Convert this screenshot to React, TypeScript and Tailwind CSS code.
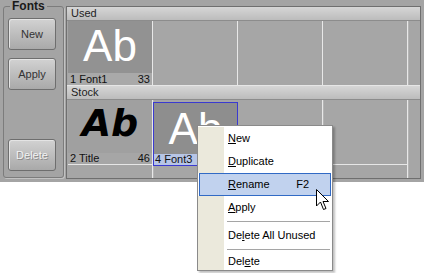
import React from 'react'

const CELL_BG = 'bg-[#a6a6a6]'

function Header({ title }: { title: string }) {
  return (
    <div className="h-[14px] flex items-center pl-[4px] text-[11px] leading-none text-[#1e1e1e] bg-gradient-to-b from-[#d6d6d6] to-[#bcbcbc] border-b border-[#8c8c8c]">
      {title}
    </div>
  )
}

function Sep() {
  return <div className="w-px self-stretch bg-[#e8e8e8] shadow-[1px_0_0_#b4b4b4]" />
}

function Btn({ label, disabled }: { label: string; disabled?: boolean }) {
  return (
    <button
      className={`w-[48px] h-[32px] ml-[4px] rounded-[3px] border border-[#6e6e6e] bg-gradient-to-b from-[#d2d2d2] to-[#a9a9a9] shadow-[inset_1px_1px_0_#e4e4e4] text-[11px] ${
        disabled ? 'text-[#f2f2f2] [text-shadow:1px_1px_0_#8a8a8a]' : 'text-[#333]'
      }`}
    >
      {label}
    </button>
  )
}

function MenuItem({ children, hot, shortcut, h = 'h-[23px]' }: { children: React.ReactNode; hot?: boolean; shortcut?: string; h?: string }) {
  if (hot) {
    return (
      <div className={`${h} mx-[1px] flex items-center bg-[#c1d2ee] border border-[#316ac5]`}>
        <div className="w-[28px]" />
        <span className="flex-1">{children}</span>
        <span className="mr-[21px]">{shortcut}</span>
      </div>
    )
  }
  return (
    <div className={`${h} flex items-center`}>
      <div className="w-[26px] self-stretch bg-[#ebe9dc]" />
      <span className="pl-[4px]">{children}</span>
    </div>
  )
}

function MenuSep() {
  return (
    <div className="h-[5px] flex items-center">
      <div className="w-[26px] self-stretch bg-[#ebe9dc]" />
      <div className="flex-1 ml-[3px] mr-[2px] h-px bg-[#a5a5a5]" />
    </div>
  )
}

export default function App() {
  return (
    <div className="relative w-[424px] h-[273px] bg-white overflow-hidden font-['Liberation_Sans',Arial,sans-serif]">
      <div className="h-[182px] bg-[#a4a4a4] flex items-start">
        {/* Fonts group */}
        <fieldset className="ml-[3px] w-[61px] h-[178px] border border-[#7c7c7c] rounded-[3px] shadow-[1px_1px_0_#c2c2c2] flex flex-col pb-[6px]">
          <legend className="ml-[6px] px-[2px] text-[12px] leading-[12px] font-bold text-[#1a1a1a]">Fonts</legend>
          <div className="mt-[6px]">
            <Btn label="New" />
          </div>
          <div className="mt-[8px]">
            <Btn label="Apply" />
          </div>
          <div className="mt-auto">
            <Btn label="Delete" disabled />
          </div>
        </fieldset>

        {/* Font list */}
        <div className="ml-[2px] mt-[6px] w-[355px] h-[173px] border border-[#6f6f6f] flex flex-col bg-[#a6a6a6]">
          <Header title="Used" />
          <div className="h-[65px] flex pl-[1px] border-b border-[#e6e6e6]">
            <div className="w-[84px] flex flex-col">
              <div className="h-[52px] bg-[#929292] flex items-center justify-center text-white text-[44px] leading-none pb-[2px]">
                Ab
              </div>
              <div className="flex-1 flex items-center justify-between px-[2px] text-[11px] leading-none text-[#111] bg-[#a9a9a9]">
                <span>1 Font1</span>
                <span>33</span>
              </div>
            </div>
            <Sep />
            <div className={`w-[84px] ${CELL_BG}`} />
            <Sep />
            <div className={`w-[84px] ${CELL_BG}`} />
            <Sep />
            <div className={`w-[84px] ${CELL_BG}`} />
            <Sep />
          </div>
          <Header title="Stock" />
          <div className="flex-1 flex pl-[1px]">
            <div className="w-[84px] flex flex-col">
              <div className="h-[65px] flex flex-col border-b border-[#e6e6e6]">
                <div className="h-[54px] bg-[#a0a0a0] flex items-center justify-center text-black text-[38px] leading-none font-bold italic font-['DejaVu_Sans',sans-serif] pb-[8px]">
                  Ab
                </div>
                <div className="flex-1 flex items-center justify-between px-[2px] text-[11px] leading-none text-[#111]">
                  <span>2 Title</span>
                  <span>46</span>
                </div>
              </div>
            </div>
            <Sep />
            <div className="w-[85px] flex flex-col">
              <div className="mt-[2px] h-[64px] border border-[#3a3ad0] flex flex-col">
                <div className="h-[52px] bg-[#8e8e8e] flex items-center justify-center text-white text-[44px] leading-none">
                  Ab
                </div>
                <div className="flex-1 flex items-center px-[1px] text-[11px] leading-none text-[#111] bg-[#b7c5e6]">
                  4 Font3
                </div>
              </div>
            </div>
            <div className="w-[84px] flex flex-col">
              <div className="h-[65px] border-b border-[#e6e6e6]" />
            </div>
            <Sep />
            <div className="w-[84px] flex flex-col">
              <div className="h-[65px] border-b border-[#e6e6e6]" />
            </div>
            <Sep />
          </div>
        </div>
      </div>

      {/* Context menu */}
      <div className="absolute left-[197px] top-[125px] w-[136px] h-[146px] bg-white border border-[#8a8a8a] shadow-[2px_2px_2px_rgba(0,0,0,0.25)] overflow-hidden flex flex-col pt-[1px] text-[11px] text-black">
        <MenuItem><span className="underline">N</span>ew</MenuItem>
        <MenuItem><span className="underline">D</span>uplicate</MenuItem>
        <MenuItem hot shortcut="F2"><span className="underline">R</span>ename</MenuItem>
        <MenuItem><span className="underline">A</span>pply</MenuItem>
        <MenuSep />
        <MenuItem>De<span className="underline">l</span>ete All Unused</MenuItem>
        <MenuSep />
        <MenuItem h="flex-1">Del<span className="underline">e</span>te</MenuItem>
      </div>

      {/* Mouse cursor */}
      <svg className="absolute left-[316px] top-[189px]" width="14" height="22" viewBox="0 0 14 22">
        <path d="M0.5 0.5 L0.5 17 L4.5 13 L7.5 20.5 L10 19.5 L7 12.5 L12.5 12.5 Z" fill="white" stroke="black" strokeWidth="1" strokeLinejoin="miter" />
      </svg>
    </div>
  )
}
